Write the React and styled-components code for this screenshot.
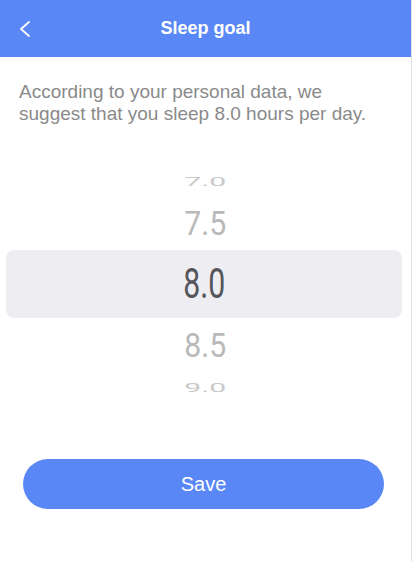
import React from "react";
import { styled, createGlobalStyle } from "styled-components";

const GlobalStyle = createGlobalStyle`
    body {
        margin: 0;
        background: #ffffff;
        font-family: "Liberation Sans", Arial, sans-serif;
    }
`

const Screen = styled.div`
    width: 411px;
    height: 562px;
    border-right: 1px solid #e2e2e2;
    display: flex;
    flex-direction: column;
    background: #ffffff;
`

const Header = styled.header`
    height: 57px;
    background: #5987f5;
    display: grid;
    grid-template-columns: 60px 1fr 60px;
    align-items: center;
`

const BackButton = styled.button`
    border: none;
    background: none;
    padding: 0 0 0 19px;
    height: 57px;
    display: flex;
    align-items: center;
    cursor: pointer;
`

const Title = styled.h1`
    margin: 0;
    text-align: center;
    color: #ffffff;
    font-size: 18px;
    font-weight: 700;
`

const Intro = styled.p`
    margin: 24px 19px 0;
    font-size: 19px;
    line-height: 22px;
    color: #8a8a8a;
`

const Wheel = styled.div`
    margin-top: 41px;
    display: flex;
    flex-direction: column;
`

const Row = styled.div`
    height: ${(p) => p.$height}px;
    display: flex;
    align-items: center;
    justify-content: center;
    overflow: hidden;
`

const SelectedRow = styled(Row)`
    margin: 0 9px 0 6px;
    background: #eeeef2;
    border-radius: 8px;
`

const Value = styled.span`
    display: inline-block;
    font-family: Roboto, "Liberation Sans", sans-serif;
    font-weight: 400;
    font-size: 42px;
    line-height: 1;
    color: ${(p) => p.$color};
    transform: scale(0.72, ${(p) => p.$squash});
`

const SaveButton = styled.button`
    margin: 56px 27px 0 23px;
    height: 50px;
    border: none;
    border-radius: 25px;
    background: #5987f5;
    color: #ffffff;
    font-family: "Liberation Sans", Arial, sans-serif;
    font-size: 20px;
    cursor: pointer;
`

const rows = [
    { label: "7.0", height: 32, squash: 0.3, color: "#c9c9c9" },
    { label: "7.5", height: 52, squash: 0.8, color: "#b9b9b9" },
    { label: "8.0", height: 68, squash: 1, color: "#55555c", selected: true },
    { label: "8.5", height: 55, squash: 0.8, color: "#b9b9b9" },
    { label: "9.0", height: 30, squash: 0.3, color: "#c9c9c9" },
]

const App = () => {
    return (
        <>
            <GlobalStyle />
            <Screen>
                <Header>
                    <BackButton aria-label="Back">
                        <svg width="12" height="16" viewBox="0 0 12 16">
                            <path d="M10 1 L2 8 L10 15" fill="none" stroke="#ffffff" strokeWidth="1.8" strokeLinecap="round" strokeLinejoin="round" />
                        </svg>
                    </BackButton>
                    <Title>Sleep goal</Title>
                    <div />
                </Header>
                <Intro>
                    According to your personal data, we suggest that you sleep 8.0 hours per day.
                </Intro>
                <Wheel>
                    {rows.map((r) => {
                        const RowKind = r.selected ? SelectedRow : Row
                        return (
                            <RowKind key={r.label} $height={r.height}>
                                <Value $color={r.color} $squash={r.squash}>{r.label}</Value>
                            </RowKind>
                        )
                    })}
                </Wheel>
                <SaveButton>Save</SaveButton>
            </Screen>
        </>
    )
}

export default App
